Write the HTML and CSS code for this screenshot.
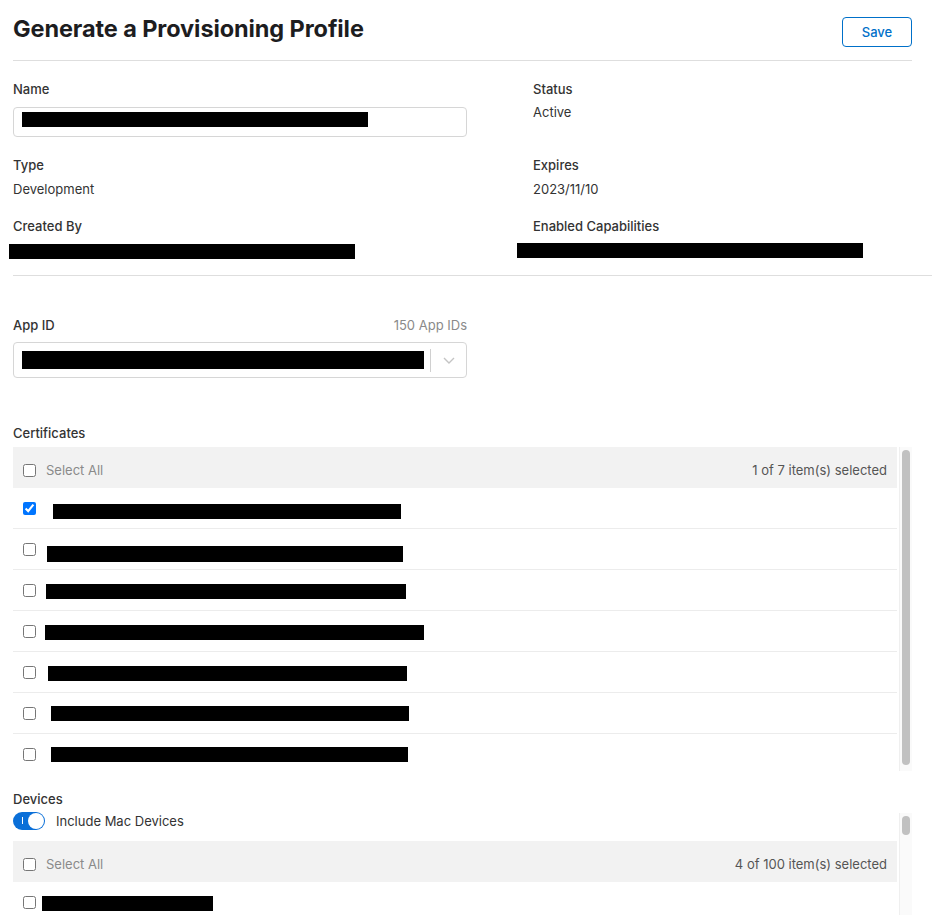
FILE: index.html
```html
<!DOCTYPE html>
<html lang="en">
<head>
<meta charset="utf-8">
<title>Generate a Provisioning Profile</title>
<link rel="stylesheet" href="styles.css">
</head>
<body>
<div class="page">
  <header class="head">
    <h1 class="title">Generate a Provisioning Profile</h1>
    <button class="btn" type="button">Save</button>
  </header>

  <section class="details">
    <div class="field">
      <div class="label">Name</div>
      <div class="input"><span class="redact r-name"></span></div>
    </div>
    <div class="field">
      <div class="label">Status</div>
      <div class="value value-tight">Active</div>
    </div>
    <div class="field">
      <div class="label">Type</div>
      <div class="value">Development</div>
    </div>
    <div class="field">
      <div class="label">Expires</div>
      <div class="value">2023/11/10</div>
    </div>
    <div class="field">
      <div class="label">Created By</div>
      <div class="redact r-created"></div>
    </div>
    <div class="field">
      <div class="label">Enabled Capabilities</div>
      <div class="redact r-caps"></div>
    </div>
  </section>

  <div class="rule-wide"></div>

  <section class="appid">
    <div class="appid-head">
      <span class="label">App ID</span>
      <span class="muted">150 App IDs</span>
    </div>
    <div class="select">
      <span class="redact r-appid"></span>
      <span class="sep"></span>
      <svg class="chev" width="12" height="7" viewBox="0 0 12 7"><polyline points="1,1 6,6 11,1" fill="none" stroke="#c4c4c4" stroke-width="1.4"/></svg>
    </div>
  </section>

  <section class="certs">
    <div class="label">Certificates</div>
    <div class="scroller cert-scroller">
      <div class="list">
        <div class="list-head">
          <label class="select-all"><input type="checkbox" class="cb"><span>Select All</span></label>
          <span class="muted-dark">1 of 7 item(s) selected</span>
        </div>
        <div class="row"><input type="checkbox" class="cb" checked><span class="redact c1"></span></div>
        <div class="row"><input type="checkbox" class="cb"><span class="redact c2"></span></div>
        <div class="row"><input type="checkbox" class="cb"><span class="redact c3"></span></div>
        <div class="row"><input type="checkbox" class="cb"><span class="redact c4"></span></div>
        <div class="row"><input type="checkbox" class="cb"><span class="redact c5"></span></div>
        <div class="row"><input type="checkbox" class="cb"><span class="redact c6"></span></div>
        <div class="row"><input type="checkbox" class="cb"><span class="redact c7"></span></div>
      </div>
      <div class="track"><div class="thumb thumb-long"></div></div>
    </div>
  </section>

  <section class="devices">
    <div class="label">Devices</div>
    <div class="scroller dev-scroller">
      <div class="list dev-list">
        <div class="toggle-row">
          <span class="toggle"><span class="toggle-mark"></span><span class="knob"></span></span>
          <span class="toggle-label">Include Mac Devices</span>
        </div>
        <div class="list-head">
          <label class="select-all"><input type="checkbox" class="cb"><span>Select All</span></label>
          <span class="muted-dark">4 of 100 item(s) selected</span>
        </div>
        <div class="row"><input type="checkbox" class="cb"><span class="redact d1"></span></div>
        <div class="row"><input type="checkbox" class="cb"><span class="redact d2"></span></div>
      </div>
      <div class="track dev-track"><div class="thumb thumb-short"></div></div>
    </div>
  </section>
</div>
</body>
</html>
```

FILE: styles.css
```css
* { box-sizing: border-box; }

body {
  margin: 0;
  background: #fff;
  color: #333;
  font-family: Inter, "Helvetica Neue", "Liberation Sans", Arial, sans-serif;
  font-size: 13px;
  line-height: 18px;
}

.page {
  padding: 0 20px 0 13px;
}

.head {
  display: flex;
  justify-content: space-between;
  align-items: flex-start;
  padding-top: 17px;
  padding-bottom: 13px;
  border-bottom: 1px solid #dedede;
}

.title {
  margin: -3px 0 0 0;
  font-size: 23.5px;
  line-height: 30px;
  font-weight: 700;
  color: #1d1d1f;
  letter-spacing: -0.1px;
}

.btn {
  width: 70px;
  height: 30px;
  border: 1px solid #0070c9;
  border-radius: 4px;
  background: #fff;
  color: #0070c9;
  font-family: inherit;
  font-size: 13px;
  font-weight: 500;
  padding: 0;
}

.details {
  display: grid;
  grid-template-columns: 520px 1fr;
  row-gap: 19px;
  padding-top: 19px;
}

.label {
  font-weight: 500;
  color: #333;
  line-height: 18px;
}

.value {
  margin-top: 6px;
  line-height: 18px;
  color: #333;
}

.value-tight {
  margin-top: 5px;
}

.input {
  margin-top: 9px;
  width: 454px;
  height: 30px;
  border: 1px solid #d6d6d6;
  border-radius: 4px;
  padding: 4px 0 0 8px;
}

.redact {
  display: block;
  background: #000;
  height: 15px;
}

.r-name { width: 346px; }
.r-created { margin-top: 9px; margin-left: -4px; width: 346px; }
.r-caps { margin-top: 8px; margin-left: -16px; width: 346px; }

.rule-wide {
  margin-top: 16px;
  margin-right: -20px;
  border-top: 1px solid #dedede;
}

.appid {
  width: 454px;
  margin-top: 40px;
}

.appid-head {
  display: flex;
  justify-content: space-between;
  align-items: baseline;
}

.muted {
  color: #8a8a8a;
}

.select {
  margin-top: 8px;
  height: 36px;
  border: 1px solid #d6d6d6;
  border-radius: 4px;
  display: flex;
  align-items: center;
  padding-left: 8px;
}

.r-appid { width: 402px; height: 18px; }

.sep {
  width: 1px;
  height: 23px;
  background: #d0d0d0;
  margin-left: 6px;
}

.chev {
  margin-left: 12px;
}

.certs {
  margin-top: 46px;
}

.scroller {
  display: flex;
  gap: 2px;
}

.cert-scroller {
  margin-top: 5px;
  height: 324px;
}

.list {
  flex: 1;
  overflow: hidden;
}

.list-head {
  height: 41px;
  background: #f2f2f2;
  display: flex;
  align-items: center;
  justify-content: space-between;
  padding: 5px 10px 0 10px;
}

.select-all {
  display: flex;
  align-items: center;
  gap: 10px;
  color: #8a8a8a;
}

.muted-dark {
  color: #555;
}

.cb {
  margin: 0;
  width: 13px;
  height: 13px;
  flex: none;
}

.row {
  height: 41px;
  border-bottom: 1px solid #ececec;
  display: flex;
  align-items: center;
  padding-left: 10px;
}

.c1 { margin-left: 17px; width: 348px; margin-top: 6px; }
.c2 { margin-left: 11px; width: 356px; height: 16px; margin-top: 9px; }
.c3 { margin-left: 10px; width: 360px; margin-top: 2px; }
.c4 { margin-left: 9px; width: 379px; margin-top: 2px; }
.c5 { margin-left: 12px; width: 359px; margin-top: 2px; }
.c6 { margin-left: 15px; width: 358px; }
.c7 { margin-left: 15px; width: 357px; }

.track {
  width: 13px;
  background: #fafafa;
  border-left: 1px solid #efefef;
  padding: 3px 2px 0 2px;
}

.thumb {
  background: #c1c1c1;
  border-radius: 4px;
  width: 8px;
}

.thumb-long { height: 315px; }
.thumb-short { height: 19px; }

.devices {
  margin-top: 19px;
}

.dev-scroller {
  margin-top: 2px;
  height: 120px;
}

.dev-track {
  margin-top: 3px;
}

.toggle-row {
  height: 22px;
  display: flex;
  align-items: center;
  gap: 11px;
  margin-bottom: 9px;
}

.toggle {
  position: relative;
  width: 32px;
  height: 18px;
  border-radius: 9px;
  background: #0a6fd8;
  flex: none;
}

.toggle-mark {
  position: absolute;
  left: 9px;
  top: 5px;
  width: 1px;
  height: 7px;
  background: #fff;
}

.knob {
  position: absolute;
  right: 1px;
  top: 1px;
  width: 16px;
  height: 16px;
  border-radius: 50%;
  background: #fff;
}

.toggle-label {
  color: #333;
}

.d1 { margin-left: 6px; width: 171px; margin-top: 2px; }
.d2 { margin-left: 6px; width: 200px; }
```
